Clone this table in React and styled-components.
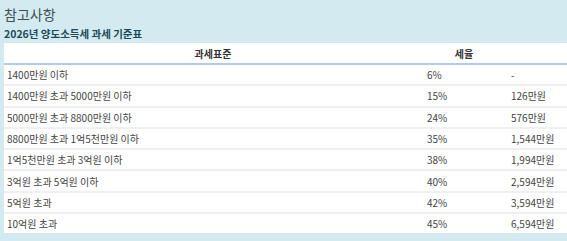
import React from "react";
import styled, { createGlobalStyle } from "styled-components";

const GlobalStyle = createGlobalStyle`
  html, body {
    margin: 0;
    padding: 0;
    background: #d3ebf0;
    overflow: hidden;
  }
  body {
    font-family: "Noto Sans CJK KR", "Noto Sans", sans-serif;
  }
`;

const Wrapper = styled.section`
  width: 567px;
  height: 241px;
  background: #d3ebf0;
  padding: 4px 0 0 4px;
  box-sizing: border-box;
`;

const Titulo = styled.h2`
  margin: 0;
  font-size: 14px;
  font-weight: 400;
  line-height: 20px;
  color: #3d4f56;
`;

const SubTitulo = styled.h3`
  margin: 2px 0 0 0;
  font-size: 10.5px;
  font-weight: 700;
  line-height: 16px;
  color: #1c4a5b;
`;

const Tabela = styled.table`
  margin-top: 1px;
  width: 563px;
  border-collapse: collapse;
  table-layout: fixed;
  background: #fff;
  font-size: 10px;
  color: #444;
`;

const Cabecalho = styled.th`
  height: 20px;
  padding: 0;
  font-weight: 700;
  font-size: 10px;
  color: #333;
  text-align: center;
  border-bottom: 2px solid #b5c9ea;
`;

const Linha = styled.tr`
  border-top: ${(p) => (p.$first ? "none" : "2px solid #eef0f2")};
`;

const Celula = styled.td`
  height: 19.3px;
  padding: 0 0 0 ${(p) => p.$pad || 3}px;
  white-space: nowrap;
  line-height: 19px;
`;

const dados = [
  ["1400만원 이하", "6%", "-"],
  ["1400만원 초과 5000만원 이하", "15%", "126만원"],
  ["5000만원 초과 8800만원 이하", "24%", "576만원"],
  ["8800만원 초과 1억5천만원 이하", "35%", "1,544만원"],
  ["1억5천만원 초과 3억원 이하", "38%", "1,994만원"],
  ["3억원 초과 5억원 이하", "40%", "2,594만원"],
  ["5억원 초과", "42%", "3,594만원"],
  ["10억원 초과", "45%", "6,594만원"],
];

export default function App() {
  return (
    <Wrapper>
      <GlobalStyle />
      <Titulo>참고사항</Titulo>
      <SubTitulo>2026년 양도소득세 과세 기준표</SubTitulo>
      <Tabela>
        <colgroup>
          <col style={{ width: 418 }} />
          <col style={{ width: 84 }} />
          <col />
        </colgroup>
        <thead>
          <tr>
            <Cabecalho>과세표준</Cabecalho>
            <Cabecalho>세율</Cabecalho>
            <Cabecalho />
          </tr>
        </thead>
        <tbody>
          {dados.map((d, i) => (
            <Linha key={i} $first={i === 0}>
              <Celula>{d[0]}</Celula>
              <Celula $pad={5}>{d[1]}</Celula>
              <Celula $pad={5}>{d[2]}</Celula>
            </Linha>
          ))}
        </tbody>
      </Tabela>
    </Wrapper>
  );
}
